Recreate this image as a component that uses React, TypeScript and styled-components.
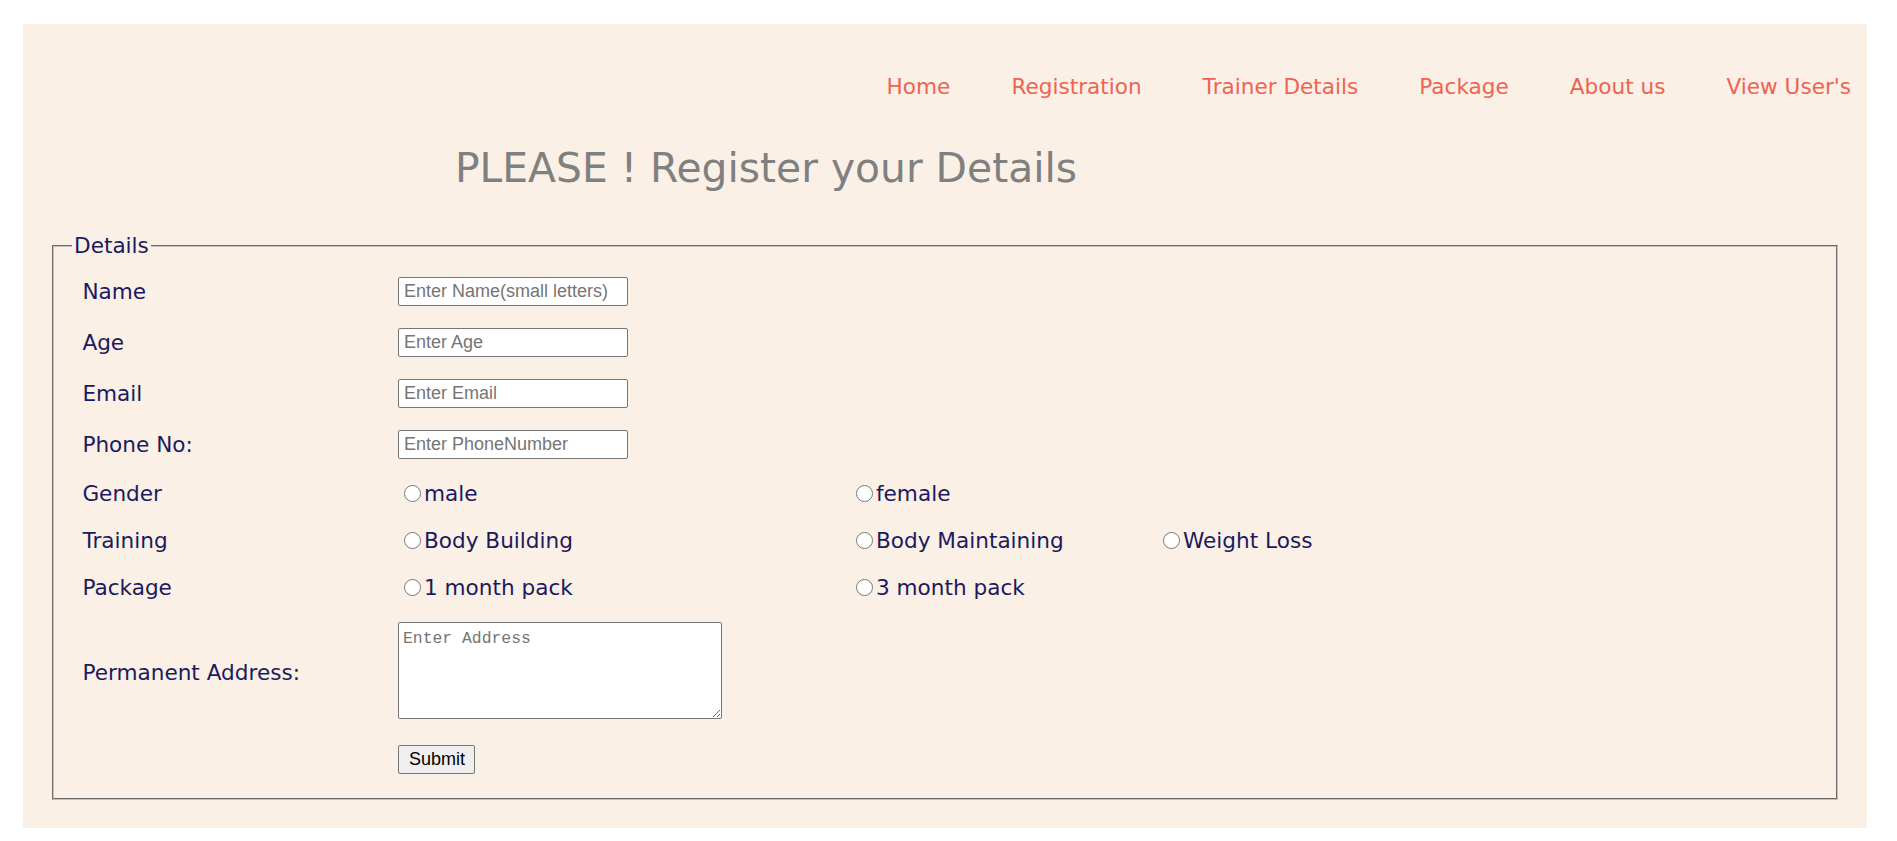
import React from "react";
import styled, { createGlobalStyle } from "styled-components";

const GlobalStyle = createGlobalStyle`
  html, body {
    margin: 0;
    padding: 0;
    background: #ffffff;
  }
  body {
    font-family: "DejaVu Sans", Verdana, sans-serif;
  }
`;

const Page = styled.div`
  padding: 24px 30px 14px 23px;
`;

const Container = styled.div`
  background: #faf0e6;
  display: flex;
  flex-direction: column;
  padding-bottom: 28px;
`;

const Nav = styled.nav`
  display: flex;
  justify-content: flex-end;
  gap: 61px;
  padding: 50px 16px 0 0;
`;

const NavLink = styled.a`
  color: #ee6352;
  font-family: "DejaVu Sans", Verdana, sans-serif;
  font-size: 21.6px;
  line-height: normal;
  text-decoration: none;
  cursor: pointer;
`;

const Heading = styled.h1`
  margin: 45px 0 0 432px;
  font-family: "DejaVu Sans", Verdana, sans-serif;
  font-size: 40.8px;
  font-weight: normal;
  line-height: normal;
  color: #808080;
`;

const Fieldset = styled.fieldset`
  margin: 41px 29px 0 29px;
  padding: 7px 18px 13px;
  border: 2px groove #c0c0c0;
  font-family: "DejaVu Sans", Verdana, sans-serif;
  font-size: 21.6px;
  color: #1c1a5e;
`;

const Legend = styled.legend`
  padding: 0 2px;
  color: #1c1a5e;
  font-size: 21.6px;
  line-height: normal;
`;

const FormGrid = styled.div`
  display: grid;
  grid-template-columns: 315.6px 452px 307px 1fr;
  row-gap: 22px;
  align-items: center;
  padding: 12px 0 11px 10.4px;
`;

const Label = styled.div`
  grid-column: 1;
  font-size: 21.6px;
  line-height: normal;
  color: #1c1a5e;
`;

const Field = styled.div<{ $col?: number }>`
  grid-column: ${(p) => p.$col ?? 2};
  display: flex;
  align-items: center;
  min-height: 25px;
`;

const TextInput = styled.input`
  box-sizing: border-box;
  width: 230px;
  height: 29px;
  padding: 0 5px;
  border: 1px solid #767676;
  border-radius: 2px;
  background: #ffffff;
  font-family: "Liberation Sans", Arial, sans-serif;
  font-size: 18px;
  color: #000;
  &::placeholder {
    color: #757575;
  }
`;

const TextArea = styled.textarea`
  display: block;
  box-sizing: border-box;
  width: 324px;
  height: 97px;
  margin: 0 0 4px 0;
  padding: 6px 4px 3px;
  border: 1px solid #767676;
  border-radius: 2px;
  background: #ffffff;
  font-family: "Liberation Mono", "Courier New", monospace;
  font-size: 16.4px;
  &::placeholder {
    color: #757575;
  }
`;

const RadioLabel = styled.label`
  display: inline-flex;
  align-items: center;
  font-size: 21.6px;
  line-height: normal;
  color: #1c1a5e;
  cursor: pointer;
`;

const Radio = styled.input`
  width: 17px;
  height: 17px;
  margin: 0 3px 0 6px;
  flex: none;
`;

const SubmitButton = styled.button`
  box-sizing: border-box;
  height: 29px;
  width: 77px;
  padding: 0 10px;
  border: 1px solid #767676;
  border-radius: 2px;
  background: #efefef;
  color: #000;
  font-family: "Liberation Sans", Arial, sans-serif;
  font-size: 18px;
  cursor: pointer;
`;

const navItems = ["Home", "Registration", "Trainer Details", "Package", "About us", "View User's"];

const textRows = [
  { label: "Name", placeholder: "Enter Name(small letters)" },
  { label: "Age", placeholder: "Enter Age" },
  { label: "Email", placeholder: "Enter Email" },
  { label: "Phone No:", placeholder: "Enter PhoneNumber" },
];

const radioRows = [
  { label: "Gender", name: "gender", options: ["male", "female"] },
  { label: "Training", name: "training", options: ["Body Building", "Body Maintaining", "Weight Loss"] },
  { label: "Package", name: "package", options: ["1 month pack", "3 month pack"] },
];

export default function App() {
  return (
    <>
      <GlobalStyle />
      <Page>
        <Container>
          <Nav>
            {navItems.map((n) => (
              <NavLink key={n}>{n}</NavLink>
            ))}
          </Nav>
          <Heading>PLEASE ! Register your Details</Heading>
          <Fieldset>
            <Legend>Details</Legend>
            <FormGrid>
              {textRows.map((r) => (
                <React.Fragment key={r.label}>
                  <Label>{r.label}</Label>
                  <Field>
                    <TextInput type="text" placeholder={r.placeholder} />
                  </Field>
                </React.Fragment>
              ))}
              {radioRows.map((r) => (
                <React.Fragment key={r.label}>
                  <Label>{r.label}</Label>
                  {r.options.map((o, i) => (
                    <Field key={o} $col={i + 2}>
                      <RadioLabel>
                        <Radio type="radio" name={r.name} />
                        {o}
                      </RadioLabel>
                    </Field>
                  ))}
                </React.Fragment>
              ))}
              <Label>Permanent Address:</Label>
              <Field>
                <TextArea placeholder="Enter Address" />
              </Field>
              <Field>
                <SubmitButton type="button">Submit</SubmitButton>
              </Field>
            </FormGrid>
          </Fieldset>
        </Container>
      </Page>
    </>
  );
}
